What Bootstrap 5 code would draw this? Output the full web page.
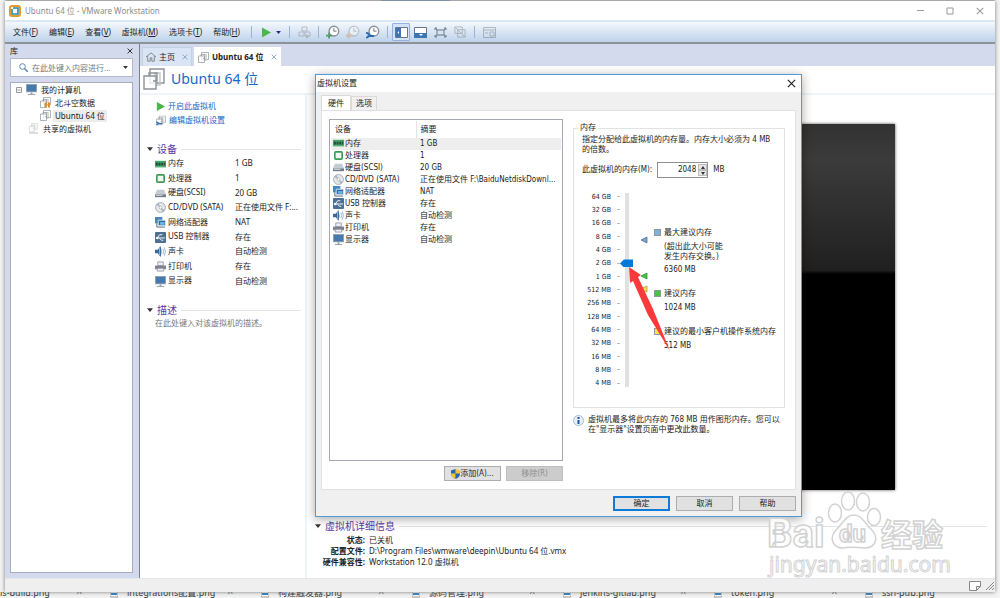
<!DOCTYPE html>
<html lang="zh-CN">
<head>
<meta charset="utf-8">
<meta name="viewport" content="width=device-width, initial-scale=1">
<title>Ubuntu 64 位 - VMware Workstation</title>
<link href="https://cdn.jsdelivr.net/npm/bootstrap@5.3.0/dist/css/bootstrap.min.css" rel="stylesheet">
<style>
  body { font-family: "Noto Sans", "Noto Sans CJK SC", sans-serif; font-size: 8px; line-height: 12px; color: #222; background: #f3f3f3; }
  svg { display: block; flex: none; }
  button, input { font: inherit; color: inherit; }
  button { padding: 0; border: 0; background: none; }
  a { text-decoration: none; color: inherit; }
  .desk { height: 100vh; padding: 0 5px; }
  .topline { height: 1px; background: linear-gradient(90deg, #c9c9c9 38%, #86a2d4 38%, #86a2d4 45%, #c9c9c9 45%); }
  .vmwin { flex: 1 1 0; min-height: 0; background: #fff; box-shadow: 0 0 4px #777; z-index: 1; }
  .titlebar { height: 19px; font-size: 9px; color: #8c8c8c; }
  .titlebar > span { font-size: 8px; }
  .wctl { width: 30px; }
  .menubar { height: 24px; padding-left: 8px; border-top: 2px solid #dbe8f4; border-bottom: 2px solid #8d9299; background: linear-gradient(#f4f8fd, #bdd2ea); }
  .menus { width: 238px; gap: 11px; }
  .vsep { width: 1px; height: 12px; background: #9db4d4; }
  .pressed { width: 18px; height: 18px; background: #d3e3fa; border: 1px solid #93b0de; border-radius: 1px; }
  .tools svg { margin: 0 auto; }
  .tool { width: 20px; }
  .dim { opacity: .4; }
  .lavender { background: #d4daed; min-height: 0; }
  .library { width: 134px; padding: 0 6px 5px 5px; }
  .libhead { height: 13px; }
  .searchbox { height: 19px; background: #fff; border: 1px solid #b3b9c9; margin: 1px 0 5px; }
  .searchbox input { border: 0; outline: 0; padding: 0; width: 84px; background: none; }
  .searchbox input::placeholder { color: #777; opacity: 1; }
  .tree { background: #fff; border: 1px solid #a9adba; padding: 0 0 0 5px; }
  .tree li { height: 13px; }
  .picked { background: #ececec; padding: 0 2px; margin-left: -2px; }
  .work { border-left: 1px solid #7c8088; min-width: 0; }
  .tabs { height: 22px; padding: 3px 0 0 2px; gap: 2px; }
  .vtab { height: 19px; padding: 0 3px; gap: 3px; background: #d9e5f5; border: 1px solid #c0d2ea; border-bottom: 0; }
  .vtab.active { background: #fff; border-color: #fff; font-weight: 700; }
  .vmhead { height: 29px; border-bottom: 2px solid #eef4fa; gap: 6px; padding: 0 0 1px 3px; }
  .vmhead h1 { font-size: 14px; line-height: 22px; font-weight: 400; color: #1468c8; margin: 0; }
  .leftcol { width: 167px; border-right: 2px solid #eef4fa; padding: 4px 4px 0 7px; }
  .act { height: 14px; margin-left: 9px; gap: 3px; color: #1468c8; }
  .sect { font-size: 10px; line-height: 12px; font-weight: 400; color: #5b3aa5; margin: 0; gap: 4px; }
  .leftcol .sect { margin-top: 16px; }
  .sect::after { content: ""; flex: 1; height: 1px; background: #e4e4e4; }
  .devs { height: 132px; width: 100%; margin: 1px 0 0 8px; table-layout: fixed; }
  .devs td, .hw td, .hw th { padding: 0; white-space: nowrap; overflow: hidden; }
  .devs td:first-child { width: 80px; }
  .devs svg, .hw svg { display: inline-block; vertical-align: middle; margin-right: 1px; }
  .devs svg { margin-right: 2px; }
  .muted { color: #777; padding: 1px 0 0 8px; }
  .preview { width: 487px; height: 366px; margin: 29px auto 0; background: linear-gradient(#323232, #3b3b3b 10%, #202020 40%, #000 41%); box-shadow: 0 0 3px #555; }
  .details { padding: 0 8px 0 8px; margin-top: 30px; }
  .details dl { display: grid; grid-template-columns: 50px auto; column-gap: 4px; row-gap: 0; margin: 2px 0 0; }
  .details dt { text-align: right; }
  .details dd { margin: 0; }
  .details dt, .details dd { line-height: 11px; white-space: nowrap; }
  .statusbar { height: 14px; background: #efefef; padding-right: 1px; border-top: 1px solid #e4e6ea; }
  .files { height: 6px; font-size: 9px; line-height: 9px; color: #333; margin: 0 -5px; }
  .files a { flex: 0 0 151px; height: 12px; margin-top: -4px; white-space: nowrap; }
  .files a:first-child { flex-basis: 94px; }
  .files svg { margin-right: 9px; }
  .files .mark-up { margin-left: auto; margin-right: 12px; }
  /* settings dialog */
  .dlg { position: absolute; left: 315px; top: 74px; width: 487px; height: 443px; z-index: 5; background: #f0f0f0; border: 1px solid #4d9bd9; box-shadow: 0 2px 10px rgba(0,0,0,.35); font-family: "DejaVu Sans Condensed", "Noto Sans CJK SC", sans-serif; }
  .dlghead { height: 17px; background: #fff; padding: 0 5px 0 1px; }
  .dtabs { padding: 3px 0 0 5px; }
  .dtab { height: 14px; padding: 0 4px; border: 1px solid #dadada; border-bottom: 0; }
  .dtab.active { height: 16px; background: #fff; padding: 0 6px; margin-bottom: -1px; }
  .dpage { height: 380px; margin: 0 5px; background: #fff; border: 1px solid #e0e0e0; padding: 8px 8px 0 7px; }
  .hwbox { width: 234px; height: 342px; border: 1px solid #a4a9b2; padding: 1px; }
  .hw { width: 100%; table-layout: fixed; }
  .hw .first { width: 85px; }
  .hw tr { height: 12px; }
  .hw thead tr { height: 17px; }
  .hw th { font-weight: 400; padding-left: 4px; }
  .hw th + th { border-left: 1px solid #e4e4e4; }
  .hw td { padding-left: 2px; line-height: 12px; text-overflow: ellipsis; }
  .hw td + td { padding-left: 4px; }
  .chosen { background: #eee; }
  .addrow { gap: 5px; padding-top: 5px; }
  .wbtn { width: 57px; height: 15px; background: #e1e1e1; border: 1px solid #adadad; line-height: 12px; }
  .wbtn:disabled { background: #ccc; color: #909090; border-color: #bfbfbf; }
  .wbtn.primary { border: 2px solid #0f7bd8; line-height: 10px; }
  .side { padding-left: 10px; }
  .mem { height: 285px; border: 1px solid #e2e2e2; margin: 4px 2px 0 0; padding: 0 6px 0 8px; }
  .mem legend { float: none; width: auto; font-size: 8px; line-height: 10px; margin: 0 0 0 -4px; padding: 0 2px; }
  .mem p { line-height: 10px; margin: 2px 0 0; }
  .ask { margin-top: 7px; }
  .spin { width: 51px; height: 16px; border: 1px solid #8f8f8f; margin: 0 5px; }
  .spin input { width: 38px; border: 0; outline: 0; text-align: right; padding: 0; background: none; }
  .spin button { width: 9px; height: 6px; background: #e6e6e6; border: 1px solid #bbb; }
  .gauge { padding-top: 12px; }
  .scale { width: 38px; height: 200px; text-align: right; font-size: 7px; margin: 0; }
  .scale li { display: flex; align-items: center; justify-content: flex-end; flex: 1; white-space: nowrap; gap: 6px; }
  .scale li::after { content: ""; width: 3px; height: 1px; background: #bbb; }
  .rail { position: relative; width: 14px; height: 194px; margin-top: 3px; }
  .rail input { position: absolute; left: -90px; top: 90px; width: 194px; height: 14px; margin: 0; transform: rotate(-90deg); appearance: none; -webkit-appearance: none; background: none; }
  .rail input::-webkit-slider-runnable-track { height: 4px; background: #e1e1e1; }
  .rail input::-webkit-slider-thumb { -webkit-appearance: none; width: 8px; height: 13px; margin-top: -5px; background: #0078d7; clip-path: polygon(0 30%, 50% 0, 100% 30%, 100% 100%, 0 100%); }
  .flags { width: 20px; padding-top: 46px; }
  .marks { padding-top: 36px; white-space: nowrap; line-height: 14px; }
  .marks .sq { width: 7px; height: 7px; margin: 3px 3px 0 0; border: 1px solid #8a9a9a; flex: none; }
  .marks .note { line-height: 10px; margin: 2px 0 1px; }
  .marks > div + div { margin-top: 10px; }
  .hint { line-height: 10px; gap: 4px; margin-top: 7px; }
  .dfoot { gap: 6px; padding: 6px 5px 0; }
  .arrow { position: absolute; left: 309px; top: 190px; pointer-events: none; }
  .brand { position: absolute; right: 46px; bottom: 16px; z-index: 6; pointer-events: none; }
</style>
</head>
<body class="overflow-hidden">
<svg width="0" height="0" class="position-absolute" aria-hidden="true">
  <symbol id="vm" viewBox="0 0 22 22"><g fill="#fff" stroke="#8d9399" stroke-width="1.4"><path d="M7 1h14v14H7z"/><path d="M12 5h5v12h-5z" fill="none" stroke="#c2c6ca"/><path d="M1 8h12v13H1z" fill-opacity=".8"/><path d="M6 8V5h8v8h-4" fill="none"/></g></symbol>
  <symbol id="play" viewBox="0 0 10 10"><path d="M1 0l9 5-9 5z" fill="#49b749"/></symbol>
  <symbol id="down" viewBox="0 0 8 5"><path d="M0 0h8L4 5z" fill="#333"/></symbol>
  <symbol id="cross" viewBox="0 0 10 10"><path d="M1 1l8 8M9 1L1 9" stroke="currentColor" stroke-width="1.3"/></symbol>
  <symbol id="mem" viewBox="0 0 12 12"><path d="M0 2h12v7H0z" fill="#3fa565"/><path d="M1 4h2v3H1zM4 4h2v3H4zM7 4h2v3H7zM10 4h1v3h-1z" fill="#24433a"/><path d="M0 9h12" stroke="#a8d4b2"/></symbol>
  <symbol id="cpu" viewBox="0 0 12 12"><rect x="2" y="2" width="8" height="8" rx="1" fill="#f0f7f1" stroke="#3d9c5a" stroke-width="1.8"/></symbol>
  <symbol id="hdd" viewBox="0 0 12 12"><path d="M2 2h8l2 5H0z" fill="#c3cbd3"/><path d="M0 7h12v3H0z" fill="#6f7c8a"/><path d="M1 8h7" stroke="#dfe5ea"/></symbol>
  <symbol id="cd" viewBox="0 0 12 12"><circle cx="6" cy="6" r="5.4" fill="#e4e8ec" stroke="#a2abb4"/><path d="M6 6L1 3a6 6 0 013-2zM6 6l5 3a6 6 0 01-3 2z" fill="#aab6c4"/><circle cx="6" cy="6" r="1.5" fill="#fff" stroke="#999" stroke-width=".6"/></symbol>
  <symbol id="net" viewBox="0 0 12 12"><path d="M0 0h8v7H0z" fill="#4a86bd"/><path d="M3.500 3.500h8v6h-8z" fill="#2e6ca8" stroke="#d5e8f5"/><path d="M5.500 5.500h5v3h-5z" fill="#6db2e4"/><path d="M2 7v4h9" stroke="#566" fill="none"/></symbol>
  <symbol id="usb" viewBox="0 0 12 12"><rect width="12" height="12" rx="1" fill="#4c7093"/><path d="M1 6.500h10M3 6l2-3h3M5 7l2 2h2" stroke="#fff" fill="none"/><circle cx="2.500" cy="6.500" r="1.300" fill="#fff"/></symbol>
  <symbol id="snd" viewBox="0 0 12 12"><path d="M0 4h3l3-4q2 6 0 12L3 8H0z" fill="#39699c"/><path d="M5 2v8" stroke="#9cc1e5"/><path d="M8.500 3q2 3 0 6M10 1.500q3 4.500 0 9" stroke="#8fb4da" fill="none"/></symbol>
  <symbol id="prn" viewBox="0 0 12 12"><path d="M3 1h6v4H3z" fill="#eef" stroke="#99a"/><path d="M0 5h12v4H0z" fill="#7c828f"/><path d="M2.500 8h7v3h-7z" fill="#eef0f4" stroke="#99a"/></symbol>
  <symbol id="mon" viewBox="0 0 12 12"><path d="M0 0h12v9H0z" fill="#97a5b2"/><path d="M1 1h10v7H1z" fill="#447aad"/><path d="M5 9h2v2h3v1H2v-1h3z" fill="#9aa4ae"/></symbol>
  <symbol id="clock" viewBox="0 0 16 16"><circle cx="9" cy="7" r="5.500" fill="#fff" stroke="#8b9095" stroke-width="1.600"/><path d="M9 3.500V7h3" fill="none" stroke="#8b9095" stroke-width="1.300"/></symbol>
  <symbol id="file" viewBox="0 0 8 10"><path d="M0 0h8v9H0z" fill="#fff" stroke="#999"/><path d="M1 5h6v2H1z" fill="#2b82c9"/></symbol>
</svg>

<div class="desk d-flex flex-column position-relative">
  <div class="topline"></div>
  <main class="vmwin d-flex flex-column position-relative">
    <header class="titlebar d-flex align-items-center">
      <svg class="ms-1 me-1" width="12" height="12" viewBox="0 0 12 12"><rect x="1" y="1" width="10" height="10" rx="2" fill="#fff" stroke="#e39a2d" stroke-width="2"/><path d="M4 3h5v6H3V4" fill="none" stroke="#2b87a8" stroke-width="1.600"/></svg>
      <span>Ubuntu 64 位 - VMware Workstation</span>
      <button class="wctl ms-auto" aria-label="最小化"><svg class="mx-auto" width="7" height="7"><path d="M0 3.500h7" stroke="#999"/></svg></button>
      <button class="wctl" aria-label="最大化"><svg class="mx-auto" width="8" height="8"><path d="M1 1h6v6H1z" fill="none" stroke="#999"/></svg></button>
      <button class="wctl" aria-label="关闭"><svg class="mx-auto" width="8" height="8" color="#999"><use href="#cross"/></svg></button>
    </header>

    <nav class="menubar d-flex align-items-center">
      <div class="menus d-flex align-items-center text-nowrap">
        <a href="#">文件(<u>F</u>)</a><a href="#">编辑(<u>E</u>)</a><a href="#">查看(<u>V</u>)</a><a href="#">虚拟机(<u>M</u>)</a><a href="#">选项卡(<u>T</u>)</a><a href="#">帮助(<u>H</u>)</a>
      </div>
      <div class="tools d-flex align-items-center">
        <i class="vsep"></i>
        <button class="tool ms-1" aria-label="开启"><svg width="10" height="11"><use href="#play"/></svg></button>
        <button aria-label="电源选项"><svg width="5" height="3" viewBox="0 0 8 5"><path d="M0 0h8L4 5z" fill="#1b2f9c"/></svg></button>
        <i class="vsep ms-2"></i>
        <button class="tool ms-1 dim" aria-label="发送按键"><svg width="13" height="13" viewBox="0 0 13 13" fill="none" stroke="#777"><path d="M4 1h5v4H4zM1 6h5v4H1zM7 6h5v4H7zM9 8v4M7 10l2 2 2-2"/></svg></button>
        <i class="vsep ms-1 me-1"></i>
        <button class="tool" aria-label="拍摄快照"><svg width="14" height="14" viewBox="0 0 16 16"><use href="#clock"/><path d="M0 12h7M3.500 8.500v7" stroke="#559a6d" stroke-width="2"/></svg></button>
        <button class="tool dim" aria-label="恢复快照"><svg width="14" height="14" viewBox="0 0 16 16"><use href="#clock"/><path d="M8 12H1M4 9l-3 3 3 3" stroke="#d58a4a" stroke-width="2" fill="none"/></svg></button>
        <button class="tool" aria-label="管理快照"><svg width="14" height="14" viewBox="0 0 16 16"><use href="#clock"/><path d="M0 9q4 0 3 3t-3 2M3 12.500h6" stroke="#2c6bb0" stroke-width="2.200" fill="none"/></svg></button>
        <i class="vsep ms-1"></i>
        <button class="pressed ms-1" aria-label="显示库"><svg width="13" height="11" viewBox="0 0 13 11"><path d="M.5.500h12v10H.500z" fill="#fff" stroke="#687685"/><path d="M1 1h5v9H1z" fill="#3e74b4"/><path d="M4 4v3L2.500 5.500z" fill="#fff"/></svg></button>
        <button class="tool" aria-label="缩略图栏"><svg width="13" height="11" viewBox="0 0 13 11"><path d="M.5.500h12v10H.500z" fill="#fff" stroke="#687685"/><path d="M0 6h13v5H0z" fill="#3e74b4"/><path d="M5 7h4L7 9z" fill="#fff"/></svg></button>
        <button class="tool" aria-label="全屏"><svg width="13" height="11" viewBox="0 0 13 11" fill="none" stroke="#687685"><path d="M3 3h7v5H3zM1 3V1h2M10 1h2v2M1 8v2h2M12 8v2h-2M1 1l2 2M12 1l-2 2M1 10l2-2M12 10l-2-2"/></svg></button>
        <button class="tool dim" aria-label="Unity"><svg width="12" height="12" viewBox="0 0 13 13" fill="none" stroke="#666"><path d="M1 1h8v7H1zM4 4h8v8H4zM1 1l11 11"/></svg></button>
        <i class="vsep ms-1"></i>
        <button class="tool ms-1 dim" aria-label="控制台视图"><svg width="13" height="11" viewBox="0 0 13 11" fill="none" stroke="#666"><path d="M.5.500h12v10H.500zM0 3h13M2 6h3M7 5h4v4H7z"/></svg></button>
      </div>
    </nav>

    <div class="d-flex flex-fill lavender">
      <aside class="library d-flex flex-column flex-shrink-0">
        <div class="libhead d-flex align-items-center justify-content-between"><span>库</span><button class="text-black" aria-label="关闭库"><svg width="6" height="6"><use href="#cross"/></svg></button></div>
        <label class="searchbox d-flex align-items-center px-1">
          <svg class="ms-1 me-1" width="9" height="9" viewBox="0 0 9 9"><circle cx="3.500" cy="3.500" r="2.800" fill="none" stroke="#5d86b8"/><path d="M5.500 5.500L9 9" stroke="#5d86b8" stroke-width="1.500"/></svg>
          <input type="text" placeholder="在此处键入内容进行..." aria-label="搜索">
          <svg class="ms-auto" width="5" height="3"><use href="#down"/></svg>
        </label>
        <ul class="tree list-unstyled flex-fill mb-0">
          <li class="d-flex align-items-center gap-1"><svg width="6" height="6"><path d="M.5.500h5v5h-5zM1.500 3h3" fill="#fff" stroke="#999"/></svg><svg width="11" height="11"><use href="#mon"/></svg>我的计算机</li>
          <li class="d-flex align-items-center ms-4"><svg class="me-1" width="11" height="11" viewBox="0 0 22 22"><use href="#vm"/><path d="M11 11v10M18 11v10" stroke="#e08a2c" stroke-width="4"/></svg>北斗空数据</li>
          <li class="d-flex align-items-center ms-4"><svg class="me-1" width="11" height="11"><use href="#vm"/></svg><span class="picked">Ubuntu 64 位</span></li>
          <li class="d-flex align-items-center ms-2"><svg class="mx-1 opacity-50" width="11" height="11" viewBox="0 0 22 22"><use href="#vm" height="18"/><path d="M2 20h18" stroke="#777" stroke-width="2"/></svg>共享的虚拟机</li>
        </ul>
      </aside>

      <section class="work d-flex flex-column flex-fill">
        <div class="tabs d-flex">
          <div class="vtab d-flex align-items-center"><svg width="10" height="10" viewBox="0 0 12 12"><path d="M0 6l6-5 6 5M2 5v6h3V7h2v4h3V5" fill="none" stroke="#777"/></svg><span>主页</span><svg class="ms-1" width="6" height="6" color="#7799bb"><use href="#cross"/></svg></div>
          <div class="vtab active d-flex align-items-center"><svg width="11" height="11"><use href="#vm"/></svg><span>Ubuntu 64 位</span><svg class="ms-1" width="6" height="6" color="#7799bb"><use href="#cross"/></svg></div>
        </div>
        <div class="bg-white d-flex flex-column flex-fill">
          <div class="vmhead d-flex align-items-center"><svg width="22" height="22"><use href="#vm"/></svg><h1>Ubuntu 64 位</h1></div>
          <div class="d-flex flex-fill">
            <div class="leftcol flex-shrink-0">
              <a class="act d-flex align-items-center" href="#"><svg width="9" height="9"><use href="#play"/></svg>开启此虚拟机</a>
              <a class="act d-flex align-items-center" href="#"><svg width="10" height="11" viewBox="0 0 22 22"><use href="#vm"/><path d="M1 14l5 3-5 4M6 18h8" fill="none" stroke="#2c6bb0" stroke-width="3"/></svg>编辑虚拟机设置</a>
              <h2 class="sect d-flex align-items-center"><svg width="6" height="4"><use href="#down"/></svg>设备</h2>
              <table class="devs"><tbody>
                <tr><td><svg width="11" height="11"><use href="#mem"/></svg>内存</td><td>1 GB</td></tr>
                <tr><td><svg width="11" height="11"><use href="#cpu"/></svg>处理器</td><td>1</td></tr>
                <tr><td><svg width="11" height="11"><use href="#hdd"/></svg>硬盘(SCSI)</td><td>20 GB</td></tr>
                <tr><td><svg width="11" height="11"><use href="#cd"/></svg>CD/DVD (SATA)</td><td>正在使用文件 F:...</td></tr>
                <tr><td><svg width="11" height="11"><use href="#net"/></svg>网络适配器</td><td>NAT</td></tr>
                <tr><td><svg width="11" height="11"><use href="#usb"/></svg>USB 控制器</td><td>存在</td></tr>
                <tr><td><svg width="11" height="11"><use href="#snd"/></svg>声卡</td><td>自动检测</td></tr>
                <tr><td><svg width="11" height="11"><use href="#prn"/></svg>打印机</td><td>存在</td></tr>
                <tr><td><svg width="11" height="11"><use href="#mon"/></svg>显示器</td><td>自动检测</td></tr>
              </tbody></table>
              <h2 class="sect d-flex align-items-center"><svg width="6" height="4"><use href="#down"/></svg>描述</h2>
              <div class="muted">在此处键入对该虚拟机的描述。</div>
            </div>
            <div class="flex-fill">
              <div class="preview"></div>
              <div class="details">
                <h2 class="sect d-flex align-items-center"><svg width="6" height="4"><use href="#down"/></svg>虚拟机详细信息</h2>
                <dl><dt>状态:</dt><dd>已关机</dd><dt>配置文件:</dt><dd>D:\Program Files\wmware\deepin\Ubuntu 64 位.vmx</dd><dt>硬件兼容性:</dt><dd>Workstation 12.0 虚拟机</dd></dl>
              </div>
            </div>
          </div>
        </div>
      </section>
    </div>
    <footer class="statusbar d-flex align-items-center justify-content-end gap-1"><svg width="12" height="10" viewBox="0 0 12 10"><path d="M.5.500h11v5l-4 4h-7zM11.500 5.500h-4v4" fill="#fff" stroke="#888"/></svg><svg width="9" height="9"><path d="M1 9l8-8M4 9l5-5M7 9l2-2" stroke="#888"/></svg></footer>
  </main>
  <div class="files d-flex overflow-hidden">
    <a class="d-flex" href="#">is-build.png<span class="mark-up">^</span></a>
    <a class="d-flex ps-3" href="#"><svg width="8" height="10"><use href="#file"/></svg>integrations配置.png<span class="mark-up">^</span></a>
    <a class="d-flex ps-3" href="#"><svg width="8" height="10"><use href="#file"/></svg>构建触发器.png<span class="mark-up">^</span></a>
    <a class="d-flex ps-3" href="#"><svg width="8" height="10"><use href="#file"/></svg>源码管理.png<span class="mark-up">^</span></a>
    <a class="d-flex ps-3" href="#"><svg width="8" height="10"><use href="#file"/></svg>jenkins-gitlab.png<span class="mark-up">^</span></a>
    <a class="d-flex ps-3" href="#"><svg width="8" height="10"><use href="#file"/></svg>token.png<span class="mark-up">^</span></a>
    <a class="d-flex ps-3" href="#"><svg width="8" height="10"><use href="#file"/></svg>ssh-pub.png</a>
  </div>

  <div class="dlg d-flex flex-column" role="dialog" aria-label="虚拟机设置">
    <div class="dlghead d-flex align-items-center justify-content-between"><span>虚拟机设置</span><button aria-label="关闭"><svg width="9" height="9"><use href="#cross"/></svg></button></div>
    <div class="dtabs d-flex align-items-end"><button class="dtab active">硬件</button><button class="dtab">选项</button></div>
    <div class="dpage d-flex">
      <div>
        <div class="hwbox">
          <table class="hw">
            <colgroup><col class="first"><col></colgroup>
            <thead><tr><th>设备</th><th>摘要</th></tr></thead>
            <tbody>
              <tr class="chosen"><td><svg width="11" height="11"><use href="#mem"/></svg>内存</td><td>1 GB</td></tr>
              <tr><td><svg width="11" height="11"><use href="#cpu"/></svg>处理器</td><td>1</td></tr>
              <tr><td><svg width="11" height="11"><use href="#hdd"/></svg>硬盘(SCSI)</td><td>20 GB</td></tr>
              <tr><td><svg width="11" height="11"><use href="#cd"/></svg>CD/DVD (SATA)</td><td>正在使用文件 F:\BaiduNetdiskDownl...</td></tr>
              <tr><td><svg width="11" height="11"><use href="#net"/></svg>网络适配器</td><td>NAT</td></tr>
              <tr><td><svg width="11" height="11"><use href="#usb"/></svg>USB 控制器</td><td>存在</td></tr>
              <tr><td><svg width="11" height="11"><use href="#snd"/></svg>声卡</td><td>自动检测</td></tr>
              <tr><td><svg width="11" height="11"><use href="#prn"/></svg>打印机</td><td>存在</td></tr>
              <tr><td><svg width="11" height="11"><use href="#mon"/></svg>显示器</td><td>自动检测</td></tr>
            </tbody>
          </table>
        </div>
        <div class="addrow d-flex justify-content-end">
          <button class="wbtn d-flex align-items-center justify-content-center"><svg width="9" height="10" viewBox="0 0 10 11"><path d="M5 0l5 1.500V5q0 4-5 6z" fill="#f3c433"/><path d="M5 0L0 1.500V5q0 4 5 6z" fill="#2a65b3"/><path d="M5 5H0q0 4 5 6z" fill="#f3c433"/><path d="M5 5h5q0 4-5 6z" fill="#2a65b3"/></svg>添加(A)...</button>
          <button class="wbtn" disabled>移除(R)</button>
        </div>
      </div>
      <div class="side flex-fill">
        <fieldset class="mem">
          <legend>内存</legend>
          <p>指定分配给此虚拟机的内存量。内存大小必须为 4 MB<br>的倍数。</p>
          <div class="ask d-flex align-items-center"><label for="memsize">此虚拟机的内存(M):</label>
            <div class="spin d-flex align-items-center"><input id="memsize" type="text" value="2048"><span class="d-flex flex-column ms-auto"><button class="d-flex align-items-center justify-content-center" aria-label="增加"><svg width="4" height="3"><path d="M0 3h4L2 0z" fill="#333"/></svg></button><button class="d-flex align-items-center justify-content-center" aria-label="减少"><svg width="4" height="3"><path d="M0 0h4L2 3z" fill="#333"/></svg></button></span></div>MB</div>
          <div class="gauge d-flex">
            <ul class="scale list-unstyled d-flex flex-column"><li>64 GB</li><li>32 GB</li><li>16 GB</li><li>8 GB</li><li>4 GB</li><li>2 GB</li><li>1 GB</li><li>512 MB</li><li>256 MB</li><li>128 MB</li><li>64 MB</li><li>32 MB</li><li>16 MB</li><li>8 MB</li><li>4 MB</li></ul>
            <div class="rail"><input type="range" min="0" max="14" value="9" aria-label="内存"></div>
            <div class="flags"><svg class="mx-auto" width="8" height="62"><g stroke-width=".7"><path d="M1 4l6-3v6z" fill="#7ba4cc" stroke="#3d6490"/><path d="M1 40l6-3v6z" fill="#46c346" stroke="#258a25"/><path d="M1 53l6-3v6z" fill="#f2e44c" stroke="#9a8c20"/></g></svg></div>
            <div class="marks">
              <div class="d-flex"><i class="sq" style="background:#82aed8"></i><div>最大建议内存<div class="note">(超出此大小可能<br>发生内存交换。)</div>6360 MB</div></div>
              <div class="d-flex"><i class="sq" style="background:#46c346"></i><div>建议内存<br>1024 MB</div></div>
              <div class="d-flex"><i class="sq" style="background:#f2e44c"></i><div>建议的最小客户机操作系统内存<br>512 MB</div></div>
            </div>
          </div>
        </fieldset>
        <div class="hint d-flex"><svg width="11" height="11" viewBox="0 0 11 11"><circle cx="5.500" cy="5.500" r="5" fill="#e6f1fb" stroke="#a7bdd4"/><path d="M5.500 2v2M5.500 5v4" stroke="#1f55ae" stroke-width="2"/></svg><span>虚拟机最多将此内存的 768 MB 用作图形内存。您可以<br>在"显示器"设置页面中更改此数量。</span></div>
      </div>
    </div>
    <div class="dfoot d-flex justify-content-end"><button class="wbtn primary">确定</button><button class="wbtn">取消</button><button class="wbtn">帮助</button></div>
    <svg class="arrow" width="50" height="90" viewBox="0 0 50 90"><path d="M4 2L16 10 13 12 28 44 45 86 23 50 8 16 5 18z" fill="#fa3a3a"/></svg>
  </div>

  <svg class="brand" width="188" height="96" viewBox="0 0 188 96" fill="#fff" fill-opacity=".85" stroke="#d2d2d2" stroke-width="1.500">
    <g font-weight="700"><text x="1" y="61" font-family="Roboto, sans-serif" font-size="40">Bai</text><text x="115" y="60" font-family="Noto Sans CJK SC, sans-serif" font-size="31">经验</text></g>
    <ellipse cx="69" cy="27" rx="6.500" ry="9"/><ellipse cx="82" cy="15" rx="6.500" ry="9"/><ellipse cx="97" cy="16" rx="6.500" ry="9"/><ellipse cx="108" cy="31" rx="6.500" ry="8.500"/>
    <path d="M88 29c8 0 11 9 17 14 9 9 4 19-6 19-7 0-15-2-22 0-10 0-15-10-6-19 6-6 9-14 17-14z"/>
    <text x="73" y="56" font-family="Roboto, sans-serif" font-weight="700" font-size="24">du</text>
    <text x="3" y="86" font-family="Noto Sans, sans-serif" font-size="21" stroke-width="1">jingyan.baidu.com</text>
  </svg>
</div>
<script src="https://cdn.jsdelivr.net/npm/bootstrap@5.3.0/dist/js/bootstrap.bundle.min.js"></script>
</body>
</html>
